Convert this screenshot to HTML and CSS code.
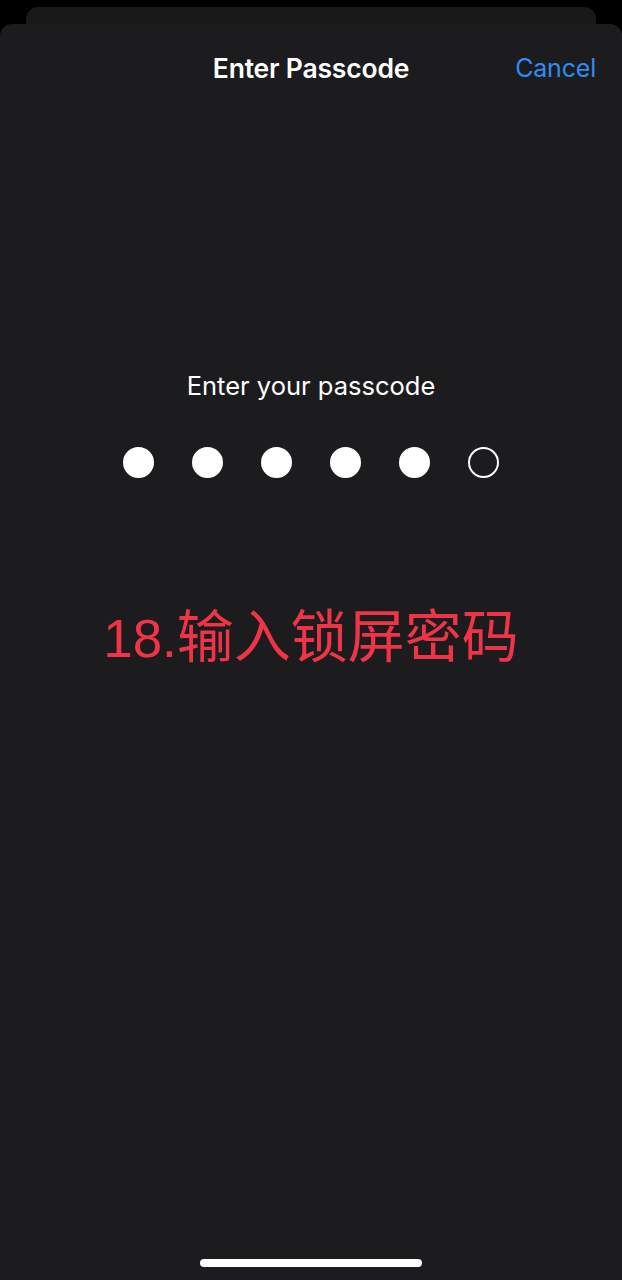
FILE: index.html
```html
<!DOCTYPE html>
<html lang="zh">
<head>
<meta charset="utf-8">
<link rel="stylesheet" href="styles.css">
</head>
<body>
<div class="back-card"></div>
<div class="sheet">
  <div class="header">
    <span></span>
    <h1 class="title">Enter Passcode</h1>
    <span class="cancel">Cancel</span>
  </div>
  <p class="prompt">Enter your passcode</p>
  <div class="dots">
    <span class="dot filled"></span>
    <span class="dot filled"></span>
    <span class="dot filled"></span>
    <span class="dot filled"></span>
    <span class="dot filled"></span>
    <span class="dot"></span>
  </div>
  <p class="note"><span class="num">18.</span>输入锁屏密码</p>
  <div class="home-indicator"></div>
</div>
</body>
</html>
```
FILE: styles.css
```css
html, body {
  margin: 0;
  padding: 0;
  background: #000;
}
body {
  width: 622px;
  height: 1280px;
  overflow: hidden;
  padding-top: 7px;
  box-sizing: border-box;
  font-family: Inter, "Noto Sans", "Liberation Sans", sans-serif;
}
.back-card {
  margin: 0 26px;
  height: 40px;
  background: #19191a;
  border-radius: 12px 12px 0 0;
}
.sheet {
  margin-top: -23px;
  height: 1256px;
  background: #1c1c1e;
  border-radius: 12px 12px 0 0;
  display: flex;
  flex-direction: column;
  align-items: center;
}
.header {
  width: 100%;
  box-sizing: border-box;
  display: grid;
  grid-template-columns: 1fr auto 1fr;
  align-items: center;
  padding: 26px 26px 0 26px;
  height: 62px;
}
.title {
  margin: 0;
  font-size: 26.5px;
  font-weight: 600;
  color: #fff;
  letter-spacing: -0.2px;
}
.cancel {
  justify-self: end;
  font-size: 25px;
  color: #2f8df0;
  letter-spacing: -0.2px;
}
.prompt {
  margin: 283px 0 0 0;
  font-size: 25.5px;
  color: #fff;
  line-height: 34px;
}
.dots {
  display: flex;
  gap: 38px;
  margin-top: 44px;
}
.dot {
  width: 31px;
  height: 31px;
  box-sizing: border-box;
  border-radius: 50%;
  border: 2px solid #fff;
}
.dot.filled {
  background: #fff;
}
.note {
  margin: 121px 0 0 0;
  font-family: "Noto Sans CJK SC", sans-serif;
  font-size: 57px;
  line-height: 66px;
  color: #ef3447;
}
.note .num {
  font-family: "Liberation Sans", sans-serif;
  font-size: 53px;
}
.home-indicator {
  margin-top: auto;
  margin-bottom: 13px;
  width: 222px;
  height: 8px;
  border-radius: 4px;
  background: #fff;
}
```
